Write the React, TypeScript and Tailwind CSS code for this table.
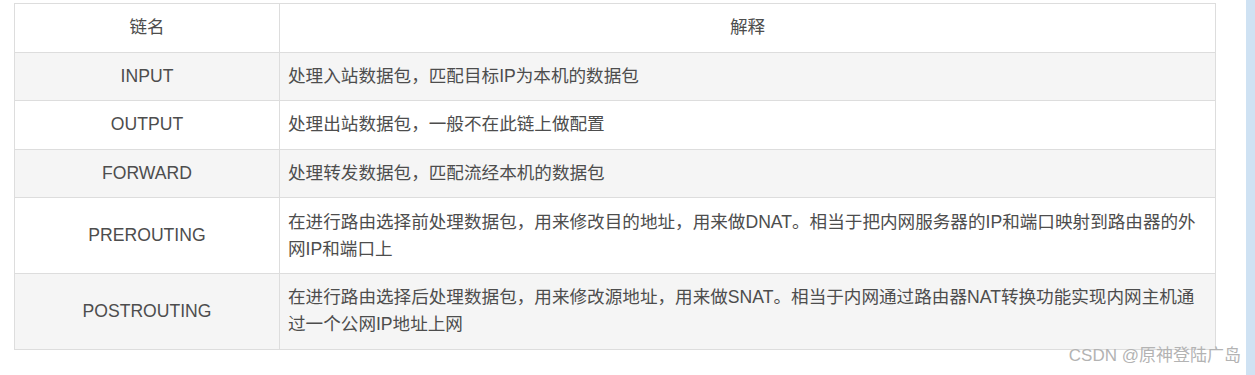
const rows = [
  { name: "INPUT", desc: "处理入站数据包，匹配目标IP为本机的数据包" },
  { name: "OUTPUT", desc: "处理出站数据包，一般不在此链上做配置" },
  { name: "FORWARD", desc: "处理转发数据包，匹配流经本机的数据包" },
  {
    name: "PREROUTING",
    desc: "在进行路由选择前处理数据包，用来修改目的地址，用来做DNAT。相当于把内网服务器的IP和端口映射到路由器的外网IP和端口上",
  },
  {
    name: "POSTROUTING",
    desc: "在进行路由选择后处理数据包，用来修改源地址，用来做SNAT。相当于内网通过路由器NAT转换功能实现内网主机通过一个公网IP地址上网",
  },
];

export default function App() {
  return (
    <div
      className="relative flex h-[375px] w-[1255px] overflow-hidden bg-white text-[#4d4d4d]"
      style={{ fontFamily: '"Liberation Sans", "Noto Sans CJK SC", sans-serif' }}
    >
      <div className="flex-1 pl-[14px] pt-[3px]">
        <table className="w-[1202px] table-fixed border-collapse text-[17.6px] leading-[27px]">
          <colgroup>
            <col className="w-[265px]" />
            <col />
          </colgroup>
          <thead>
            <tr className="bg-white">
              <th className="border border-[#dddddd] px-2 py-[10.3px] text-center font-normal">链名</th>
              <th className="border border-[#dddddd] px-2 py-[10.3px] text-center font-normal">解释</th>
            </tr>
          </thead>
          <tbody>
            {rows.map((row, i) => (
              <tr key={row.name} className={i % 2 === 0 ? "bg-[#f5f5f5]" : "bg-white"}>
                <td className="border border-[#dddddd] px-2 py-[10.3px] text-center">{row.name}</td>
                <td className="border border-[#dddddd] px-2 py-[10.3px] text-left">{row.desc}</td>
              </tr>
            ))}
          </tbody>
        </table>
      </div>
      <div className="w-[9px] bg-[#cfe2f3]" />

      {/* watermark */}
      <div className="absolute right-[14px] top-[344px] text-[17px] leading-[24px] text-[#b3b3b3]">
        CSDN @原神登陆广岛
      </div>
    </div>
  );
}
